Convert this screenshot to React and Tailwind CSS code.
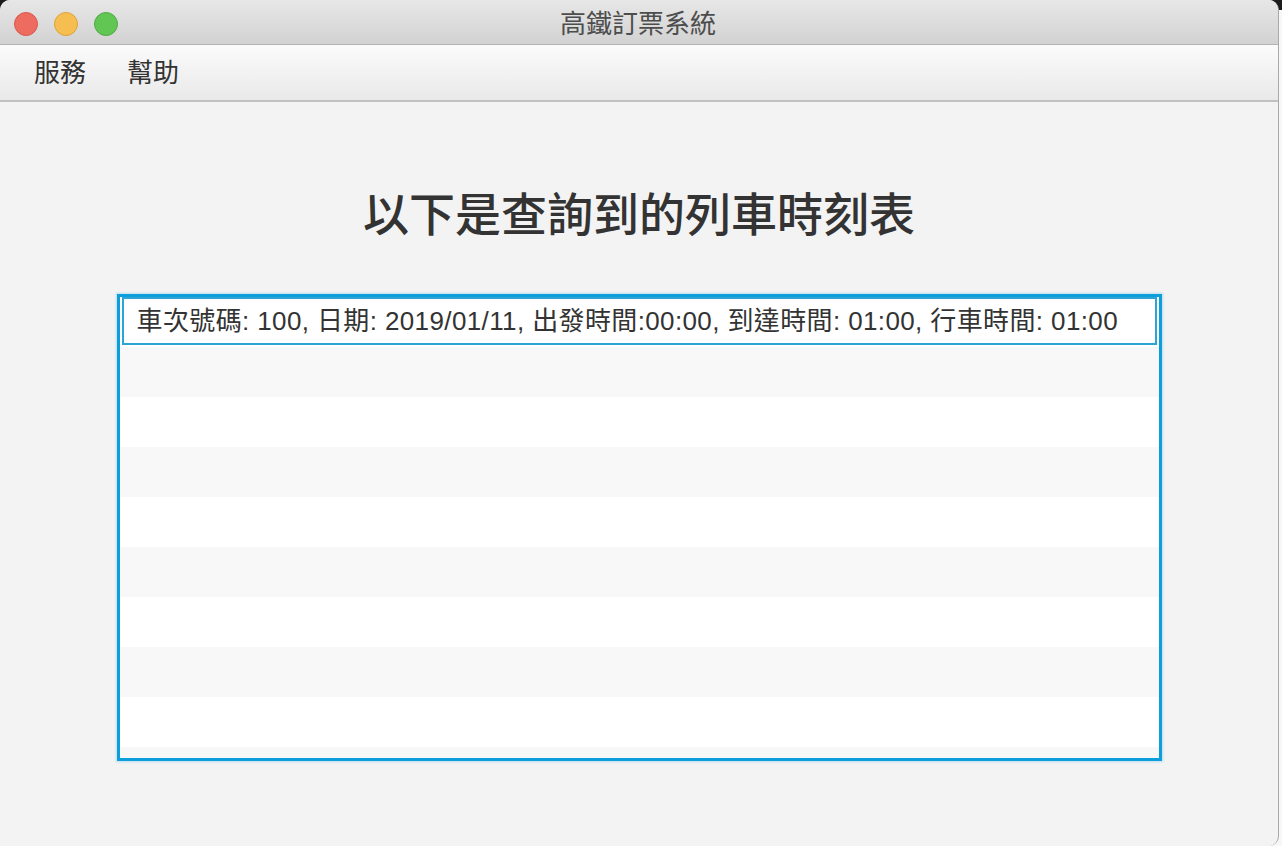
import React from "react";

const rows = Array.from({ length: 10 }, (_, i) => i);

export default function App() {
    return (
        <div
            className="w-[1282px] h-[846px] overflow-hidden bg-[linear-gradient(to_bottom,#1c1c1c_0px,#1c1c1c_10px,#f7f7f7_10px)]"
            style={{ fontFamily: '"Liberation Sans", "Noto Sans CJK TC", sans-serif' }}
        >
            <div className="w-[1279px] h-[846px] flex flex-col bg-[#f3f3f3] rounded-t-[10px] rounded-br-[10px] border-r border-[#a9a9a9] overflow-hidden">
                {/* title bar */}
                <div className="h-[45px] shrink-0 flex items-center pt-[4px] bg-[linear-gradient(to_bottom,#e7e7e7,#d2d2d2)] border-b-[1.5px] border-[#b3b3b3]">
                    <div className="flex items-center gap-[16px] pl-[14px]">
                        <span className="w-[24px] h-[24px] rounded-full bg-[#ee6b60] border border-[#d6594d]" />
                        <span className="w-[24px] h-[24px] rounded-full bg-[#f6be50] border border-[#dca43a]" />
                        <span className="w-[24px] h-[24px] rounded-full bg-[#62c655] border border-[#4eab43]" />
                    </div>
                    <div className="flex-1 text-center text-[26px] leading-none text-[#4d4d4d] pr-[120px]">
                        高鐵訂票系統
                    </div>
                </div>

                {/* menu bar */}
                <div className="h-[57px] shrink-0 flex items-center gap-[41px] pl-[34px] bg-[linear-gradient(to_bottom,#fbfbfb,#e9e9e9)] border-b-2 border-[#c1c1c1]">
                    <span className="text-[26px] leading-none text-[#333]">服務</span>
                    <span className="text-[26px] leading-none text-[#333]">幫助</span>
                </div>

                {/* content */}
                <div className="flex-1 flex flex-col items-center">
                    <h1 className="mt-[83px] h-[60px] flex items-center text-[46px] font-medium leading-none text-[#333]">
                        以下是查詢到的列車時刻表
                    </h1>
                    <div className="mt-[49px] w-[1045px] h-[467px] border-[3px] border-[#0d9fdb] shadow-[0_0_2px_1px_rgba(13,159,219,0.25)] bg-white overflow-hidden">
                        {rows.map((i) =>
                            i === 0 ? (
                                <div key={i} className="h-[50px] px-[2px] pb-[2px] bg-white">
                                    <div className="h-full border-2 border-[#2ca5d6] flex items-center pl-[13px] text-[26px] tracking-[0.38px] text-[#333] whitespace-nowrap">
                                        車次號碼: 100, 日期: 2019/01/11, 出發時間:00:00, 到達時間: 01:00, 行車時間: 01:00
                                    </div>
                                </div>
                            ) : (
                                <div
                                    key={i}
                                    className={i % 2 === 1 ? "h-[50px] bg-[#f8f8f8]" : "h-[50px] bg-white"}
                                />
                            )
                        )}
                    </div>
                </div>
            </div>
        </div>
    );
}
